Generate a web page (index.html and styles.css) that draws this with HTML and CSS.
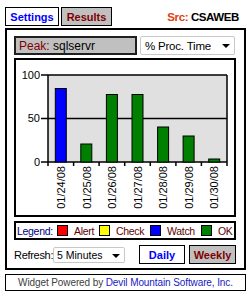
FILE: index.html
```html
<!DOCTYPE html>
<html>
<head>
    <title>CSAWEB Widget</title>
    <link rel="stylesheet" href="styles.css">
</head>
<body>
    <div class="widget">
        <div class="tabs">
            <div class="tab tab-on">Settings</div>
            <div class="tab tab-off">Results</div>
            <div class="src"><span class="src-label">Src:</span> CSAWEB</div>
        </div>

        <div class="panel">
            <div class="top-row">
                <div class="peak"><span class="peak-label">Peak:</span> sqlservr</div>
                <div class="dropdown counter">% Proc. Time<span class="arrow"></span></div>
            </div>

            <div class="chart">
                <svg width="218" height="155" viewBox="0 0 218 155">
                    <!-- plot area -->
                    <rect x="32" y="15" width="179" height="87" fill="#e0e0e0"/>
                    <line x1="32" y1="58.5" x2="211" y2="58.5" stroke="#000" stroke-width="1.5"/>
                    <g font-family="Liberation Sans, Arial, sans-serif" font-size="11" fill="#000" text-anchor="end">
                        <text x="24" y="19">100</text>
                        <text x="24" y="62">50</text>
                        <text x="24" y="106">0</text>
                    </g>
                    <g stroke="#000" stroke-width="1.5">
                        <line x1="25" y1="15" x2="211" y2="15"/>
                        <line x1="25" y1="58.5" x2="32" y2="58.5"/>
                        <line x1="25" y1="102" x2="211" y2="102"/>
                        <line x1="32" y1="15" x2="32" y2="106"/>
                        <line x1="211" y1="15" x2="211" y2="106"/>
                        <line x1="57.6" y1="102" x2="57.6" y2="106"/>
                        <line x1="83.1" y1="102" x2="83.1" y2="106"/>
                        <line x1="108.7" y1="102" x2="108.7" y2="106"/>
                        <line x1="134.3" y1="102" x2="134.3" y2="106"/>
                        <line x1="159.9" y1="102" x2="159.9" y2="106"/>
                        <line x1="185.4" y1="102" x2="185.4" y2="106"/>
                    </g>
                    <g stroke="#000" stroke-width="1">
                        <rect x="39.3" y="28.5" width="11" height="73.5" fill="#0000ff"/>
                        <rect x="64.8" y="84" width="11" height="18" fill="#008000"/>
                        <rect x="90.4" y="34.5" width="11" height="67.5" fill="#008000"/>
                        <rect x="116" y="34.5" width="11" height="67.5" fill="#008000"/>
                        <rect x="141.6" y="67" width="11" height="35" fill="#008000"/>
                        <rect x="167.1" y="76" width="11" height="26" fill="#008000"/>
                        <rect x="192.7" y="99" width="11" height="3" fill="#008000"/>
                    </g>
                    <g font-family="Liberation Sans, Arial, sans-serif" font-size="11" fill="#000" text-anchor="end">
                        <text transform="translate(49 106) rotate(-90)">01/24/08</text>
                        <text transform="translate(74.5 106) rotate(-90)">01/25/08</text>
                        <text transform="translate(100 106) rotate(-90)">01/26/08</text>
                        <text transform="translate(125.6 106) rotate(-90)">01/27/08</text>
                        <text transform="translate(151.2 106) rotate(-90)">01/28/08</text>
                        <text transform="translate(176.7 106) rotate(-90)">01/29/08</text>
                        <text transform="translate(202.3 106) rotate(-90)">01/30/08</text>
                    </g>
                </svg>
            </div>

            <div class="legend">
                <span class="legend-title">Legend:</span>
                <span class="swatch red"></span><span class="legend-item w-alert">Alert</span>
                <span class="swatch yellow"></span><span class="legend-item w-check">Check</span>
                <span class="swatch blue"></span><span class="legend-item w-watch">Watch</span>
                <span class="swatch green"></span><span class="legend-item">OK</span>
            </div>

            <div class="bottom-row">
                <span class="refresh-label">Refresh:</span>
                <div class="dropdown refresh">5 Minutes<span class="arrow"></span></div>
                <div class="btn btn-on">Daily</div>
                <div class="btn btn-off">Weekly</div>
            </div>
        </div>

        <div class="footer">Widget Powered by <span class="company">Devil Mountain Software, Inc.</span></div>
    </div>
</body>
</html>
```

FILE: styles.css
```css
body {
    margin: 0;
    padding: 0;
    background: #fff;
    font-family: "Liberation Sans", Arial, sans-serif;
    font-size: 11px;
}

.widget {
    width: 241px;
    padding: 7px 5px 0 5px;
}

.tabs {
    display: flex;
    align-items: center;
    height: 19px;
}

.tab, .btn, .swatch, .peak, .dropdown, .refresh-label, .legend-title, .legend-item {
    flex-shrink: 0;
}

.tab {
    box-sizing: border-box;
    height: 19px;
    border: 1px solid #000;
    font-weight: bold;
    font-size: 11px;
    display: flex;
    align-items: center;
    justify-content: center;
}

.tab-on {
    width: 54px;
    color: #0000ff;
    background: #fff;
}

.tab-off {
    width: 51px;
    margin-left: 2px;
    color: #800000;
    background: #c0c0c0;
}

.src {
    margin-left: auto;
    margin-right: 7px;
    font-weight: bold;
    font-size: 11.5px;
    letter-spacing: -0.4px;
    white-space: nowrap;
}

.src-label {
    color: #e04010;
}

.panel {
    margin-top: 2px;
    border: 2px solid #000;
    padding: 6px 8px 4px 7px;
}

.top-row {
    display: flex;
    height: 19px;
}

.peak {
    box-sizing: border-box;
    width: 123px;
    height: 19px;
    background: #c0c0c0;
    border: 2px solid #202020;
    padding-left: 3px;
    font-size: 12px;
    display: flex;
    align-items: center;
    white-space: pre;
}

.peak-label {
    color: #800000;
}

.dropdown {
    box-sizing: border-box;
    position: relative;
    height: 19px;
    background: #fff;
    border: 1px solid #c8c8c8;
    border-radius: 2px;
    padding-left: 4px;
    display: flex;
    align-items: center;
    white-space: nowrap;
}

.counter {
    width: 95px;
    margin-left: 3px;
    font-size: 11.5px;
    letter-spacing: -0.2px;
}

.arrow {
    position: absolute;
    right: 4px;
    top: 7px;
    width: 0;
    height: 0;
    border-left: 4px solid transparent;
    border-right: 4px solid transparent;
    border-top: 4px solid #000;
}

.chart {
    margin-top: 3px;
    height: 155px;
    border: 2px solid #000;
    background: #fff;
}

.chart svg {
    display: block;
}

.legend {
    box-sizing: border-box;
    margin-top: 4px;
    height: 19px;
    border: 2px solid #000;
    display: flex;
    align-items: center;
    padding-left: 1px;
    font-size: 10.5px;
    letter-spacing: -0.3px;
    white-space: nowrap;
    overflow: hidden;
}

.legend-title {
    width: 40px;
    color: #000080;
}

.swatch {
    display: inline-block;
    box-sizing: border-box;
    width: 11px;
    height: 11px;
    border: 1px solid #000;
    margin-right: 6px;
}

.legend-item {
    color: #600000;
}

.w-alert { width: 25px; }
.w-check { width: 34px; }
.w-watch { width: 34px; }

.red { background: #ff0000; }
.yellow { background: #ffff00; }
.blue { background: #0000ff; }
.green { background: #008000; }

.bottom-row {
    display: flex;
    align-items: center;
    margin-top: 5px;
    height: 19px;
    white-space: nowrap;
}

.refresh-label {
    width: 39px;
    letter-spacing: -0.3px;
}

.refresh {
    width: 72px;
    height: 16px;
    font-size: 10.5px;
    padding-left: 3px;
}

.refresh .arrow {
    top: 6px;
}

.btn {
    box-sizing: border-box;
    height: 19px;
    border: 1px solid #000;
    font-weight: bold;
    font-size: 11px;
    display: flex;
    align-items: center;
    justify-content: center;
}

.btn-on {
    width: 46px;
    margin-left: 14px;
    color: #0000ff;
    background: #fff;
}

.btn-off {
    width: 47px;
    margin-left: 4px;
    color: #800000;
    background: #c0c0c0;
}

.footer {
    box-sizing: border-box;
    margin-top: 4px;
    height: 17px;
    border: 1px solid #000;
    display: flex;
    align-items: center;
    justify-content: center;
    color: #404040;
    font-size: 10px;
    letter-spacing: -0.1px;
    white-space: pre;
}

.company {
    color: #2020c0;
}
```
